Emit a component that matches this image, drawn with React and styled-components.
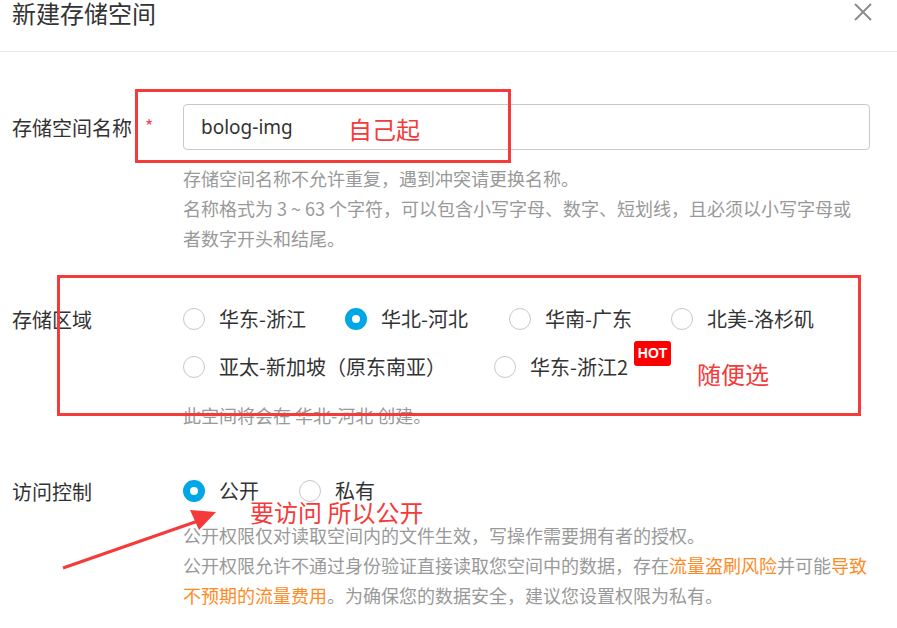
import React from 'react';
import styled, {createGlobalStyle} from 'styled-components';

const regions = [
  [{label: '华东-浙江', width: 162}, {label: '华北-河北', width: 164, checked: true}, {label: '华南-广东', width: 162}, {label: '北美-洛杉矶'}],
  [{label: '亚太-新加坡（原东南亚）', width: 311}, {label: '华东-浙江2', hot: true}],
];

const RadioOption = ({label, checked, width, hot}) => (
  <Option $width={width}>
    <RadioCircle $checked={checked}/>
    <OptionText>{label}</OptionText>
    {hot && <HotBadge>HOT</HotBadge>}
  </Option>
);

const App = () => {
  return (
    <Page>
      <GlobalStyle/>
      <Header>
        <Title>新建存储空间</Title>
        <Close>
          <svg width="20" height="20" viewBox="0 0 20 20">
            <path d="M2 2 L18 18 M18 2 L2 18" stroke="#8c8c8c" strokeWidth="2" fill="none"/>
          </svg>
        </Close>
      </Header>

      <Form>
        <Field>
          <Label $height={46}>存储空间名称<Required>*</Required></Label>
          <div>
            <Input defaultValue="bolog-img"/>
            <Help $top={13}>
              存储空间名称不允许重复，遇到冲突请更换名称。<br/>
              名称格式为 3 ~ 63 个字符，可以包含小写字母、数字、短划线，且必须以小写字母或<br/>
              者数字开头和结尾。
            </Help>
          </div>
        </Field>

        <Field $top={51}>
          <Label $height={30}>存储区域</Label>
          <div>
            <RadioRows>
              {regions.map((row, i) => (
                <RadioRow key={i}>
                  {row.map((opt) => <RadioOption key={opt.label} {...opt}/>)}
                </RadioRow>
              ))}
            </RadioRows>
            <Help $top={18}>此空间将会在 华北-河北 创建。</Help>
          </div>
        </Field>

        <Field $top={46}>
          <Label $height={30}>访问控制</Label>
          <div>
            <RadioRow>
              <RadioOption label="公开" width={116} checked/>
              <RadioOption label="私有"/>
            </RadioRow>
            <Help $top={14}>
              公开权限仅对读取空间内的文件生效，写操作需要拥有者的授权。<br/>
              公开权限允许不通过身份验证直接读取您空间中的数据，存在<Warn>流量盗刷风险</Warn>并可能<Warn>导致</Warn><br/>
              <Warn>不预期的流量费用</Warn>。为确保您的数据安全，建议您设置权限为私有。
            </Help>
          </div>
        </Field>
      </Form>

      <MarkBox $left={135} $top={89} $width={376} $height={74}/>
      <MarkText $left={348} $top={114}>自己起</MarkText>
      <MarkBox $left={57} $top={275} $width={804} $height={141}/>
      <MarkText $left={697} $top={359}>随便选</MarkText>
      <MarkText $left={250} $top={497}>要访问 所以公开</MarkText>
      <Arrow width="897" height="628" viewBox="0 0 897 628">
        <path d="M63 568 L198 521" stroke="#f53a3a" strokeWidth="3" fill="none"/>
        <path d="M216 512 L190 510 L199 530 Z" fill="#f53a3a"/>
      </Arrow>
    </Page>
  );
}

const GlobalStyle = createGlobalStyle`
  body {
    margin: 0;
    background: #fff;
    font-family: "Noto Sans CJK SC", "Noto Sans", sans-serif;
    color: #333;
  }
`

const Page = styled.div`
  position: relative;
  width: 897px;
  height: 628px;
  overflow: hidden;
  background: #fff;
`

const Header = styled.div`
  height: 51px;
  border-bottom: 1px solid #e8e8e8;
  display: flex;
  justify-content: space-between;
  align-items: flex-start;
  padding: 0 24px 0 12px;
`
const Title = styled.h1`
  margin: 0;
  font-size: 24px;
  line-height: 25px;
  font-weight: 400;
  color: #333;
`
const Close = styled.div`
  margin-top: 2px;
  width: 20px;
  height: 20px;
`

const Form = styled.div`
  padding: 52px 27px 0 12px;
`
const Field = styled.div`
  display: grid;
  grid-template-columns: 171px 1fr;
  margin-top: ${p => p.$top || 0}px;
`
const Label = styled.div`
  height: ${p => p.$height}px;
  display: flex;
  align-items: center;
  font-size: 20px;
  color: #333;
`
const Required = styled.span`
  color: #f04864;
  font-size: 18px;
  margin-left: 13px;
  margin-top: -4px;
`
const Input = styled.input`
  box-sizing: border-box;
  width: 100%;
  height: 46px;
  border: 1px solid #c9c9c9;
  border-radius: 4px;
  padding: 0 17px;
  font-family: "Noto Sans", "Noto Sans CJK SC", sans-serif;
  font-size: 19px;
  color: #333;
  outline: none;
`
const Help = styled.div`
  margin-top: ${p => p.$top}px;
  font-size: 18px;
  line-height: 30px;
  color: #999;
  white-space: nowrap;
`
const Warn = styled.span`
  color: #ff8a1f;
`

const RadioRows = styled.div`
  display: flex;
  flex-direction: column;
  gap: 18px;
`
const RadioRow = styled.div`
  display: flex;
  align-items: center;
  height: 30px;
`
const Option = styled.label`
  display: flex;
  align-items: center;
  gap: 14px;
  width: ${p => p.$width ? `${p.$width}px` : 'auto'};
  font-size: 20px;
  color: #333;
  white-space: nowrap;
`
const RadioCircle = styled.span`
  box-sizing: border-box;
  width: 22px;
  height: 22px;
  border-radius: 50%;
  background: #fff;
  border: ${p => p.$checked ? '7.5px solid #00a6e6' : '1px solid #c8c8c8'};
  flex-shrink: 0;
`
const OptionText = styled.span`
  line-height: 30px;
`
const HotBadge = styled.span`
  position: relative;
  top: -14px;
  margin-left: -8px;
  width: 37px;
  height: 25px;
  border-radius: 3px;
  background: #f00;
  color: #fff;
  font-family: "Liberation Sans", sans-serif;
  font-weight: 700;
  font-size: 14px;
  display: flex;
  align-items: center;
  justify-content: center;
`

const MarkBox = styled.div`
  position: absolute;
  left: ${p => p.$left}px;
  top: ${p => p.$top}px;
  width: ${p => p.$width}px;
  height: ${p => p.$height}px;
  box-sizing: border-box;
  border: 3px solid #f53a3a;
  pointer-events: none;
`
const MarkText = styled.div`
  position: absolute;
  left: ${p => p.$left}px;
  top: ${p => p.$top}px;
  font-size: 24px;
  line-height: 30px;
  color: #f53a3a;
  white-space: nowrap;
`
const Arrow = styled.svg`
  position: absolute;
  left: 0;
  top: 0;
  pointer-events: none;
`

export default App;
